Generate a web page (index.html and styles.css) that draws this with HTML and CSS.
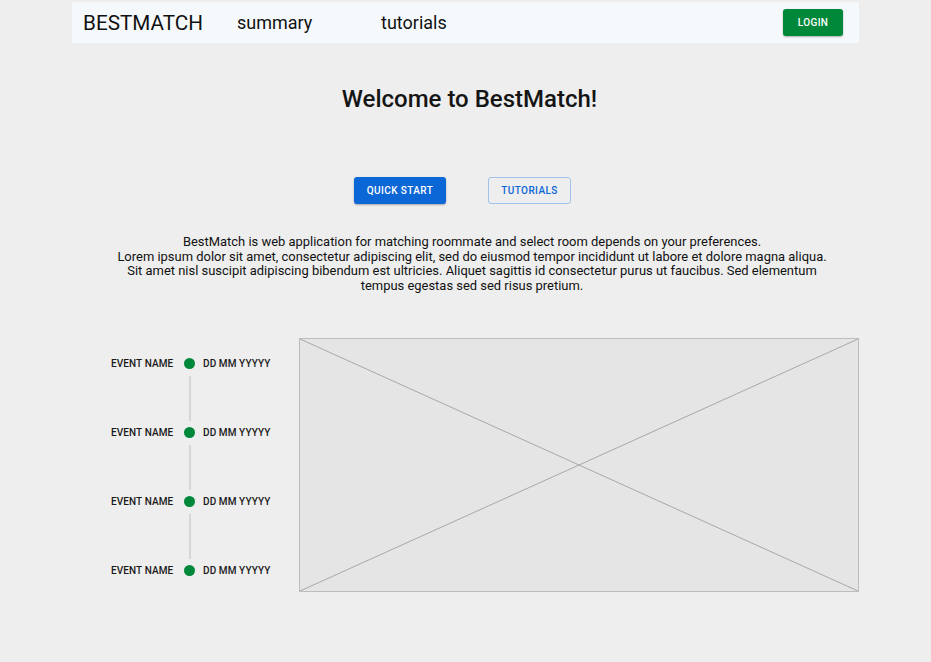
FILE: index.html
```html
<!DOCTYPE html>
<html>
<head>
<meta charset="utf-8">
<link rel="stylesheet" href="styles.css">
</head>
<body>
<div class="page">
  <header class="nav">
    <div class="brand">BESTMATCH</div>
    <a class="nav-link summary">summary</a>
    <a class="nav-link">tutorials</a>
    <div class="spacer"></div>
    <button class="btn btn-login">LOGIN</button>
  </header>

  <h1 class="title">Welcome to BestMatch!</h1>

  <div class="actions">
    <button class="btn btn-primary">QUICK START</button>
    <button class="btn btn-outline">TUTORIALS</button>
  </div>

  <p class="intro">BestMatch is web application for matching roommate and select room depends on your preferences.<br>Lorem ipsum dolor sit amet, consectetur adipiscing elit, sed do eiusmod tempor incididunt ut labore et dolore magna aliqua.<br>Sit amet nisl suscipit adipiscing bibendum est ultricies. Aliquet sagittis id consectetur purus ut faucibus. Sed elementum<br>tempus egestas sed sed risus pretium.</p>

  <section class="lower">
    <div class="timeline">
      <div class="event"><span class="ev-name">EVENT NAME</span><span class="dot"></span><span class="ev-date">DD MM YYYYY</span></div>
      <div class="connector"></div>
      <div class="event"><span class="ev-name">EVENT NAME</span><span class="dot"></span><span class="ev-date">DD MM YYYYY</span></div>
      <div class="connector"></div>
      <div class="event"><span class="ev-name">EVENT NAME</span><span class="dot"></span><span class="ev-date">DD MM YYYYY</span></div>
      <div class="connector"></div>
      <div class="event"><span class="ev-name">EVENT NAME</span><span class="dot"></span><span class="ev-date">DD MM YYYYY</span></div>
    </div>
    <div class="placeholder">
      <svg viewBox="0 0 100 100" preserveAspectRatio="none">
        <line x1="0" y1="0" x2="100" y2="100" vector-effect="non-scaling-stroke"/>
        <line x1="100" y1="0" x2="0" y2="100" vector-effect="non-scaling-stroke"/>
      </svg>
    </div>
  </section>
</div>
</body>
</html>
```
FILE: styles.css
```css
* { box-sizing: border-box; }
html, body { margin: 0; padding: 0; }
body {
  background: #eeeeee;
  font-family: Roboto, "Liberation Sans", sans-serif;
  color: #111;
}
.page {
  width: 787px;
  margin: 0 auto;
  padding-top: 2px;
}
.nav {
  height: 41px;
  background: #f5f9fc;
  display: flex;
  align-items: center;
  padding: 0 16px 0 11px;
}
.brand {
  font-size: 20.7px;
  color: #111;
}
.nav-link {
  font-size: 18px;
  color: #111;
}
.summary { margin-left: 34px; width: 144px; }
.spacer { flex: 1; }
.btn {
  font-family: Roboto, "Liberation Sans", sans-serif;
  font-weight: 500;
  font-size: 10px;
  letter-spacing: 0.4px;
  border-radius: 3px;
  cursor: pointer;
  display: inline-flex;
  align-items: center;
  justify-content: center;
}
.btn-login {
  width: 60px;
  height: 27px;
  background: #00883a;
  color: #fff;
  border: none;
  box-shadow: 0 1px 2px rgba(0,0,0,0.3);
}
.title {
  margin: 42px 0 0;
  padding-left: 8px;
  font-size: 24px;
  font-weight: 500;
  text-align: center;
  line-height: 28px;
  color: #151515;
}
.actions {
  display: flex;
  justify-content: center;
  gap: 42px;
  margin-top: 64px;
  padding-right: 6px;
}
.btn-primary {
  width: 92px;
  height: 27px;
  background: #0b66d6;
  color: #fff;
  border: none;
  box-shadow: 0 1px 2px rgba(0,0,0,0.3);
}
.btn-outline {
  width: 83px;
  height: 27px;
  background: transparent;
  color: #0b66d6;
  border: 1px solid #9fc3ea;
}
.intro {
  margin: 31px 0 0;
  padding-left: 13px;
  text-align: center;
  font-size: 12.95px;
  line-height: 14.7px;
  color: #111;
}
.lower {
  display: flex;
  align-items: flex-start;
  margin-top: 44px;
}
.timeline {
  margin-left: 39px;
  margin-top: 19px;
  width: 180px;
  flex-shrink: 0;
  display: flex;
  flex-direction: column;
}
.event {
  display: flex;
  align-items: center;
  height: 14px;
  font-size: 10px;
  font-weight: 500;
  letter-spacing: 0.1px;
  color: #1a1a1a;
  white-space: nowrap;
}
.ev-name { width: 73px; }
.dot {
  width: 11px;
  height: 11px;
  border-radius: 50%;
  background: #00883a;
  margin-right: 8px;
}
.connector {
  width: 2px;
  height: 45px;
  background: #d6d6d6;
  margin: 5px 0 5px 78px;
}
.placeholder {
  margin-left: auto;
  flex-shrink: 0;
  width: 560px;
  height: 254px;
  background: #e5e5e5;
  border: 1px solid #bdbdbd;
}
.placeholder svg {
  display: block;
  width: 100%;
  height: 100%;
}
.placeholder line {
  stroke: #a8a8a8;
  stroke-width: 1;
}
```
